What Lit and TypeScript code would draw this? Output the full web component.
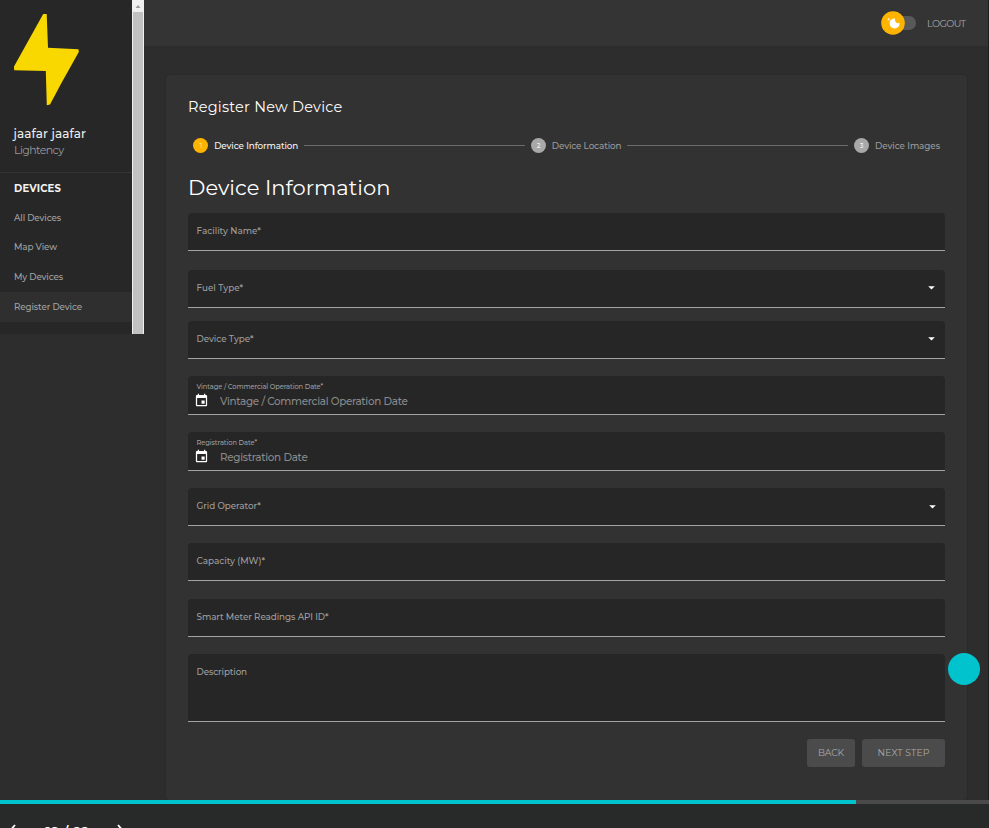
import { LitElement, html, css, nothing } from "lit";
import { customElement, property } from "lit/decorators.js";

/** A single line of text whose tracking is adjusted to occupy a given width. */
@customElement("tracked-text")
class TrackedText extends LitElement {
  @property({ type: String }) text = "";
  @property({ type: Number }) span = 0;
  static styles = css`
    :host { display: inline-block; white-space: nowrap; flex: none; }
  `;
  render() {
    return html`${this.text}`;
  }
  updated() {
    this.style.letterSpacing = "0px";
    const natural = this.getBoundingClientRect().width;
    const step = (this.span - natural) / this.text.length;
    this.style.letterSpacing = `${step.toFixed(3)}px`;
  }
}

const t = (text: string, span: number) =>
  html`<tracked-text .text=${text} .span=${span}></tracked-text>`;

interface Field {
  label: string;
  span: number;
  kind: "text" | "select" | "date" | "area";
  height: number;
  gap: number;
  value?: string;
  valueSpan?: number;
}

const FIELDS: Field[] = [
  { label: "Facility Name*", span: 64.3, kind: "text", height: 38, gap: 19 },
  { label: "Fuel Type*", span: 46.5, kind: "select", height: 38, gap: 13 },
  { label: "Device Type*", span: 57, kind: "select", height: 38, gap: 17 },
  { label: "Vintage / Commercial Operation Date*", span: 126.5, kind: "date", height: 39, gap: 17, value: "Vintage / Commercial Operation Date", valueSpan: 187.5 },
  { label: "Registration Date*", span: 60.5, kind: "date", height: 39, gap: 17, value: "Registration Date", valueSpan: 87.5 },
  { label: "Grid Operator*", span: 64.3, kind: "select", height: 38, gap: 17 },
  { label: "Capacity (MW)*", span: 68.5, kind: "text", height: 38, gap: 18 },
  { label: "Smart Meter Readings API ID*", span: 132, kind: "text", height: 38, gap: 17 },
  { label: "Description", span: 50.5, kind: "area", height: 68, gap: 17 },
];

const NAV: [string, number][] = [
  ["All Devices", 47],
  ["Map View", 43],
  ["My Devices", 49],
  ["Register Device", 68],
];

@customElement("form-field")
class FormField extends LitElement {
  @property({ attribute: false }) field!: Field;
  static styles = css`
    :host { display: block; }
    .box {
      box-sizing: border-box; height: 100%; display: flex; align-items: flex-start;
      justify-content: space-between; background: #262626; border-bottom: 1px solid #a3a3a3;
      border-radius: 4px 4px 0 0; padding: 11px 9px 0 8.5px; color: #9f9f9f;
      font-size: 8.8px; font-weight: 500; line-height: 14px;
    }
    .date { flex-direction: column; justify-content: flex-start; padding: 5.5px 6px 0; }
    .small { font-size: 6.7px; line-height: 10px; height: 10px; padding-left: 2.5px; }
    .row { display: flex; align-items: center; gap: 11px; font-size: 10.4px; line-height: 16px; color: #898989; margin-top: 2.5px; }
    .cal { width: 15px; height: 15px; display: block; margin-top: -2.5px; }
    .arrow { width: 7px; height: 4px; display: block; margin: 5px 1.5px 0 0; }
    .low { margin: 6px 0.5px 0 0; }
  `;
  render() {
    const f = this.field;
    if (f.kind === "date") {
      return html`<div class="box date">
        <div class="small">${t(f.label, f.span)}</div>
        <div class="row">
          <svg class="cal" viewBox="0 0 24 24" fill="#fff"><path d="M17 12h-5v5h5v-5zM16 1v2H8V1H6v2H5c-1.11 0-1.99.9-1.99 2L3 19c0 1.1.89 2 2 2h14c1.1 0 2-.9 2-2V5c0-1.1-.9-2-2-2h-1V1h-2zm3 18H5V8h14v11z"/></svg>
          <span>${t(f.value ?? "", f.valueSpan ?? 0)}</span>
        </div>
      </div>`;
    }
    return html`<div class="box">
      ${t(f.label, f.span)}
      ${f.kind === "select"
        ? html`<svg class="arrow ${f.label.startsWith("Grid") ? "low" : ""}" viewBox="0 0 7 4"><path d="M0.2 0.2h6.6L3.5 3.6z" fill="#fff"/></svg>`
        : nothing}
    </div>`;
  }
}

@customElement("app-root")
class AppRoot extends LitElement {
  static styles = css`
    :host {
      display: block; position: relative; width: 989px; height: 828px; overflow: hidden;
      background: #2d2d2d; color: #fff; font-family: Montserrat, Inter, "Open Sans", sans-serif;
    }
    .page { display: flex; height: 800px; align-items: flex-start; overflow: hidden; }
    .side { display: flex; width: 144px; height: 333.5px; flex: none; background: #272727; }
    .menu { width: 132px; display: flex; flex-direction: column; }
    .bolt { display: block; width: 66px; height: 92px; margin: 14px 0 0 13px; }
    .user { border-bottom: 1px solid #343434; height: 173px; box-sizing: border-box; }
    .name { padding-left: 13.5px; margin-top: 19.6px; font-size: 12px; font-weight: 500; line-height: 16px; height: 16px; color: #ececec; }
    .org { padding-left: 14px; margin-top: 0.4px; font-size: 11px; line-height: 17px; height: 17px; color: #9b9b9b; }
    .group { padding-left: 14px; height: 29.6px; line-height: 31.6px; font-size: 10px; font-weight: 700; color: #f2f2f2; }
    .item { padding-left: 14px; height: 29.8px; line-height: 30.6px; font-size: 8.8px; font-weight: 500; color: #a2a2a2; }
    .on { background: #2f2f2f; }
    .scroll { width: 12px; box-sizing: border-box; background: #f0f0f0; display: flex; flex-direction: column; align-items: center; }
    .up { width: 12px; height: 12px; }
    .thumb { width: 10px; flex: 1; background: #c1c1c1; }
    .main { flex: 1; display: flex; flex-direction: column; }
    .top { height: 46px; background: #343434; display: flex; align-items: center; justify-content: flex-end; padding-right: 23.5px; gap: 11px; font-size: 9.6px; color: #a6a6a6; }
    .toggle { display: flex; align-items: center; width: 35px; height: 24px; }
    .knob { width: 24px; height: 24px; flex: none; z-index: 1; }
    .track { width: 22px; height: 14px; border-radius: 7px; background: #595959; margin-left: -11px; flex: none; }
    .card {
      box-sizing: border-box; margin: 29px 22px 0 22px; height: 725px; background: #323232;
      border-radius: 4px; padding: 22px 22px 0; box-shadow: 0 0 2px rgba(0,0,0,.25);
    }
    .title { font-size: 14.5px; line-height: 20px; height: 20px; color: #fff; }
    .steps { display: flex; align-items: center; margin-top: 20.5px; height: 16px; padding: 0 5px 0 5.4px; font-size: 8.8px; font-weight: 500; color: #9b9b9b; }
    .dot { width: 15px; height: 15px; border-radius: 50%; background: #a8a8a8; color: #f0f0f0; font-size: 6.6px; display: flex; align-items: center; justify-content: center; margin-right: 5.8px; flex: none; }
    .cur { background: #ffb400; color: #ffe28a; }
    .active { color: #f4f4f4; }
    .rule { flex: 1; height: 1px; background: #6b6b6b; margin: -1px 6px 0; }
    .heading { font-size: 21px; line-height: 28px; height: 28px; margin: 20.5px 0 11px; }
    .buttons { display: flex; justify-content: flex-end; gap: 7px; font-size: 9.3px; color: #a8a8a8; }
    .btn { height: 28px; padding-bottom: 1px; box-sizing: border-box; border-radius: 3px; background: #4b4b4b; display: flex; align-items: center; justify-content: center; }
    .back { width: 48px; }
    .next { width: 83px; }
    .bar { height: 4px; background: #4a4a4a; }
    .done { width: 856px; height: 4px; background: #00c3ce; }
    .foot { height: 24px; background: #282a29; display: flex; align-items: flex-start; overflow: hidden; padding: 20px 0 0 9px; box-sizing: border-box; }
    .chev { width: 8px; height: 13px; display: block; flex: none; }
    .count { font-size: 13px; line-height: 18px; font-weight: 600; margin: -2px 27px 0 28.5px; }
    .bubble { position: absolute; left: 948px; top: 653px; width: 32px; height: 32px; border-radius: 50%; background: #00c3ce; }
    .edge { position: absolute; right: 0; top: 0; width: 1px; height: 800px; background: #1c1c1c; }
  `;
  render() {
    return html`
      <div class="page">
        <div class="side">
          <div class="menu">
            <div class="user">
              <svg class="bolt" viewBox="13 14 66 92"><path d="M43.2 14H46.7L48 47.7L78.5 49.2L78.8 52L62 82L50 104.5L46.8 105.2L45.8 71L14.2 70.2L14 66.5Z" fill="#f9d800"/></svg>
              <div class="name">${t("jaafar jaafar", 72.5)}</div>
              <div class="org">${t("Lightency", 49.5)}</div>
            </div>
            <div class="group">${t("DEVICES", 47)}</div>
            ${NAV.map(([n, w], i) => html`<div class="item ${i === 3 ? "on" : ""}">${t(n, w)}</div>`)}
          </div>
          <div class="scroll">
            <svg class="up" viewBox="0 0 12 12"><path d="M3.5 8h5L6 5z" fill="#999"/></svg>
            <div class="thumb"></div>
          </div>
        </div>
        <div class="main">
          <div class="top">
            <div class="toggle">
              <svg class="knob" viewBox="0 0 24 24"><circle cx="12" cy="12" r="11.8" fill="#ffb400"/><circle cx="13.6" cy="12.4" r="5" fill="#fff"/><circle cx="17.6" cy="8.6" r="3.7" fill="#ffb400"/><path d="M7.8 6.4l.5 1.3 1.3.5-1.3.5-.5 1.3-.5-1.3-1.3-.5 1.3-.5z" fill="#fff" opacity=".8"/></svg>
              <div class="track"></div>
            </div>
            ${t("LOGOUT", 38.5)}
          </div>
          <div class="card">
            <div class="title">${t("Register New Device", 154.5)}</div>
            <div class="steps">
              <div class="dot cur">1</div><span class="active">${t("Device Information", 84)}</span>
              <div class="rule"></div>
              <div class="dot">2</div>${t("Device Location", 69.5)}
              <div class="rule"></div>
              <div class="dot">3</div>${t("Device Images", 65)}
            </div>
            <div class="heading">${t("Device Information", 202.5)}</div>
            ${FIELDS.map(f => html`<form-field .field=${f} style="height:${f.height}px;margin-bottom:${f.gap}px"></form-field>`)}
            <div class="buttons">
              <div class="btn back">${t("BACK", 26)}</div>
              <div class="btn next">${t("NEXT STEP", 52)}</div>
            </div>
          </div>
        </div>
      </div>
      <div class="bar"><div class="done"></div></div>
      <div class="foot">
        <svg class="chev" viewBox="0 0 8 13"><path d="M6 1L1.5 6.2L6 11.5" fill="none" stroke="#fff" stroke-width="1.8"/></svg>
        <div class="count">${t("19 / 22", 43.5)}</div>
        <svg class="chev" viewBox="0 0 8 13"><path d="M2 1L6.5 6.2L2 11.5" fill="none" stroke="#fff" stroke-width="1.8"/></svg>
      </div>
      <div class="edge"></div>
      <div class="bubble"></div>
    `;
  }
}
